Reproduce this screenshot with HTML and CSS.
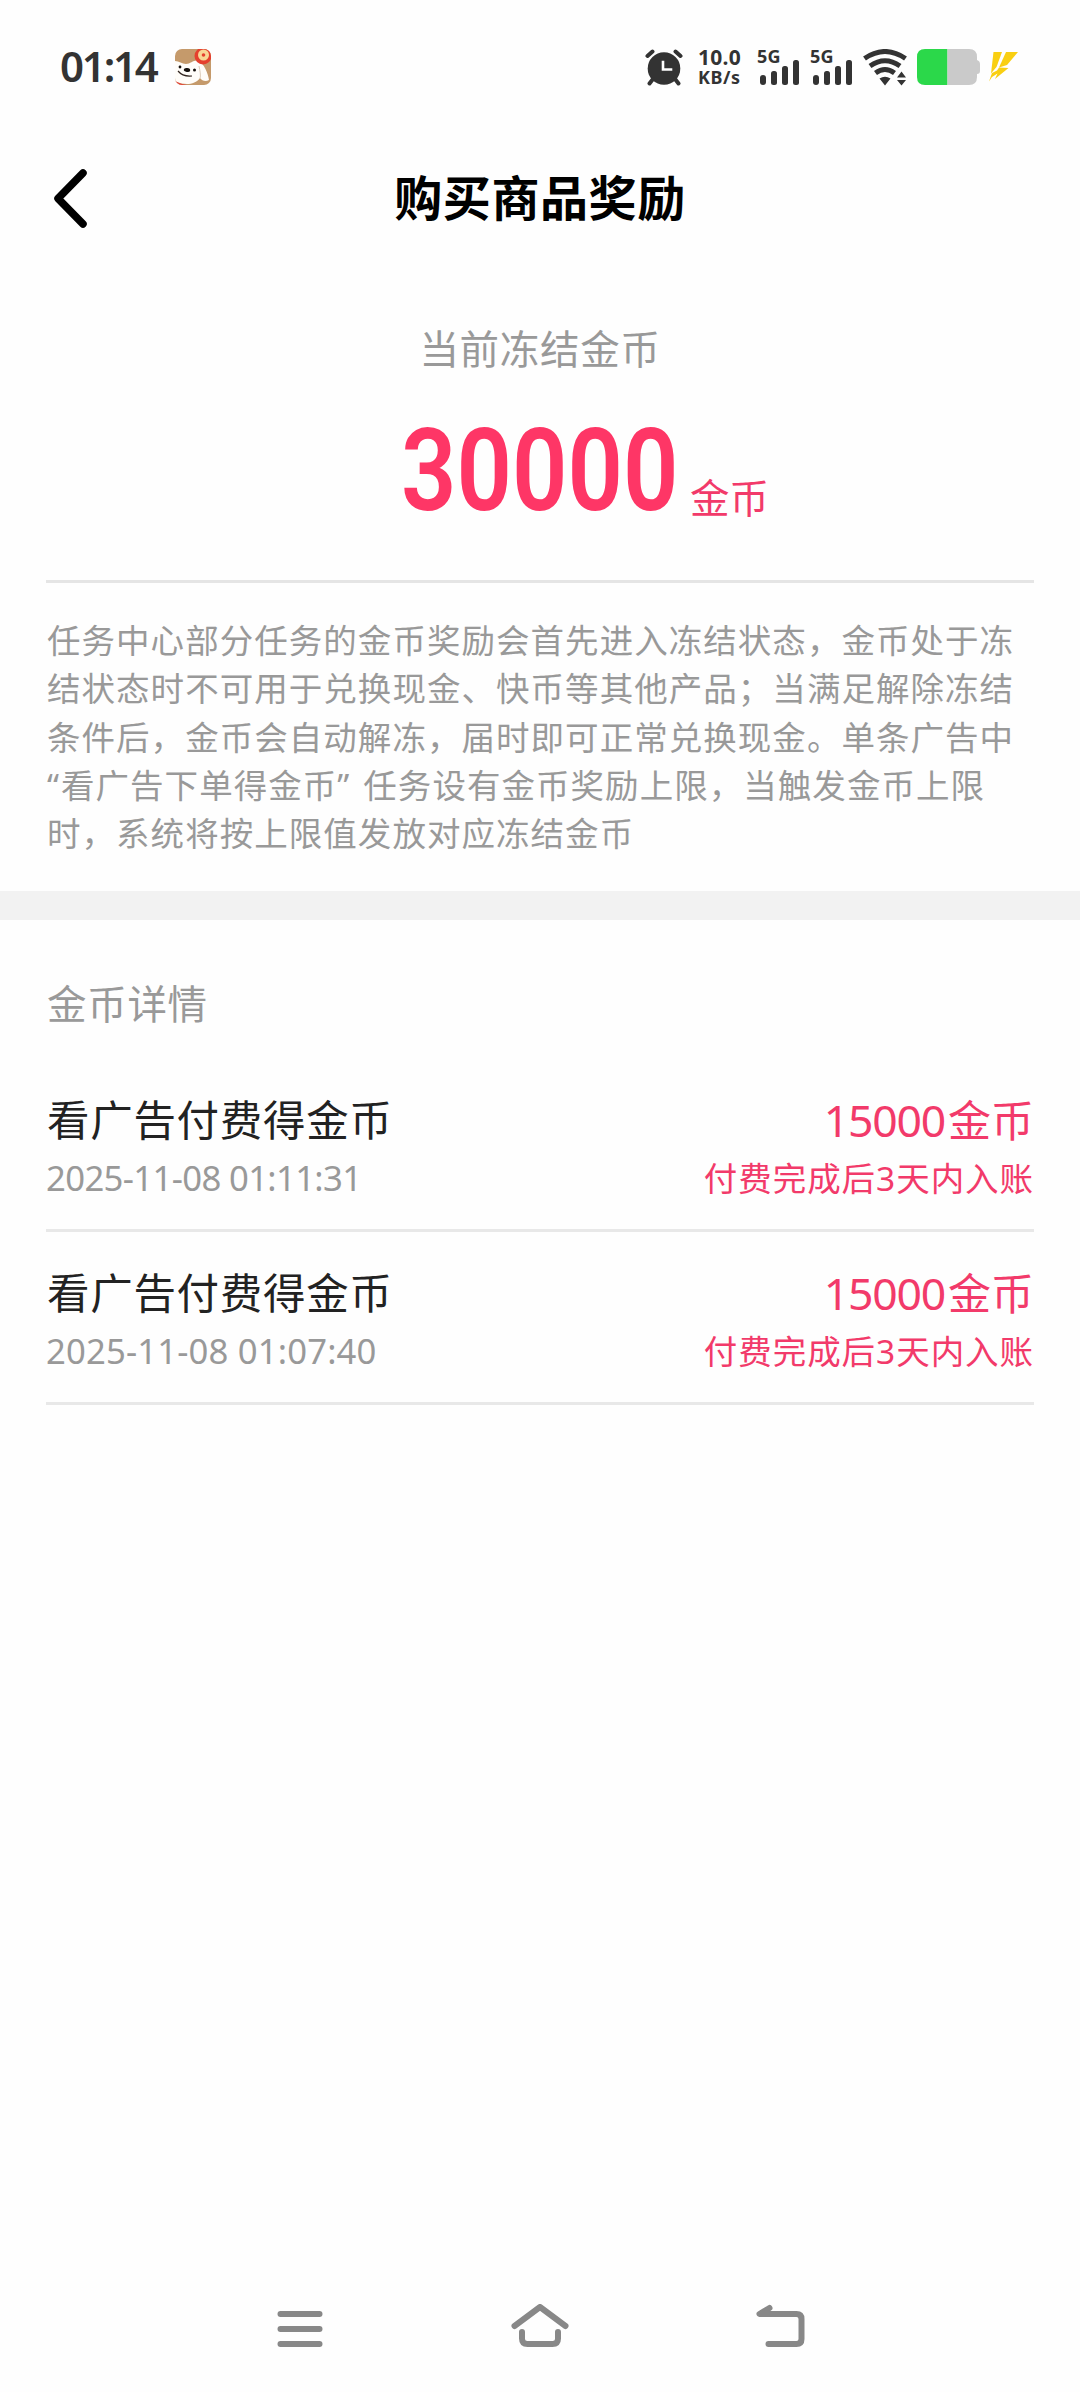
FILE: index.html
```html
<!DOCTYPE html>
<html lang="zh-CN">
<head>
<meta charset="utf-8">
<title>购买商品奖励</title>
<link rel="stylesheet" href="styles.css">
</head>
<body>
<div class="screen">
  <div class="status-bar">
    <span class="clock">01:14</span>
    <svg class="app-icon" width="36" height="36" viewBox="0 0 36 36">
      <defs><clipPath id="tile"><rect width="36" height="36" rx="7"/></clipPath></defs>
      <g clip-path="url(#tile)">
        <rect width="36" height="36" fill="#c59a6b"/>
        <path d="M0 12C4 12 7 15 11 15C16 15 19 10 24 12C29 15 33 24 34 31C31 33 27 32 25 29C22 33 17 35 12 35L0 34Z" fill="#fffdf9"/>
        <path d="M24 17C25 22 26 26 25 30" stroke="#dccbb9" stroke-width="1" fill="none"/>
        <path d="M0 32Q6 35 12 36H0Z" fill="#e2493b"/>
        <circle cx="28" cy="7" r="8.500" fill="#e5402e"/>
        <circle cx="28.500" cy="6" r="5.500" fill="#f8d695"/>
        <circle cx="28.500" cy="6" r="1.800" fill="#e5402e"/>
        <ellipse cx="12" cy="21" rx="3.200" ry="2" fill="#17120f" transform="rotate(8 12 21)"/>
        <circle cx="5" cy="18" r="1.400" fill="#17120f"/>
        <circle cx="19.500" cy="21" r="1.500" fill="#17120f"/>
        <path d="M3 22Q8 28 17 27" stroke="#32251f" stroke-width="1.200" fill="none"/>
      </g>
    </svg>
    <div class="indicators">
      <svg class="alarm" width="38" height="37" viewBox="0 0 38 37" fill="none" stroke="#333" stroke-linecap="round">
        <circle cx="19" cy="19.500" r="16.300" fill="#333" stroke="none"/>
        <path d="M2.500 7L7.500 2.500M30.500 2.500L35.500 7M8 30L4.500 34.500M30 30L33.500 34.500" stroke-width="4"/>
        <path d="M18 13V20.500H26" stroke="#fff" stroke-width="2.600" stroke-linecap="square"/>
      </svg>
      <div class="speed"><span class="speed-value">10.0</span><span class="speed-unit">KB/s</span></div>
      <div class="signal">
        <span class="network">5G</span>
        <svg width="40" height="25" viewBox="0 0 40 25" fill="#333"><rect y="15" width="6" height="10" rx="3"/><rect x="11" y="11" width="6" height="14" rx="2.500"/><rect x="22" y="6" width="6" height="19" rx="2.500"/><rect x="33" width="6" height="25" rx="2.500"/></svg>
      </div>
      <div class="signal">
        <span class="network">5G</span>
        <svg width="40" height="25" viewBox="0 0 40 25" fill="#333"><rect y="15" width="6" height="10" rx="3"/><rect x="11" y="11" width="6" height="14" rx="2.500"/><rect x="22" y="6" width="6" height="19" rx="2.500"/><rect x="33" width="6" height="25" rx="2.500"/></svg>
      </div>
      <svg class="wifi" width="45" height="37" viewBox="0 0 45 37" fill="none" stroke="#333" stroke-width="5">
        <path d="M1.500 9.500Q22 -4.500 42.500 9.500M7 17Q22 6.500 37 17M12.500 24Q22 17 31.500 24"/>
        <path d="M16.500 29.500Q22 26 27.500 29.500L22 36.500ZM34 28.500L38.500 22.500L43 28.500ZM34 31L38.500 36.500L43 31Z" fill="#333" stroke="none"/>
      </svg>
      <svg class="battery" width="63" height="36" viewBox="0 0 63 36">
        <path d="M8 0H30.500V36H8Q0 36 0 28V8Q0 0 8 0Z" fill="#2bd84a"/>
        <path d="M30.500 0H52Q60 0 60 8V11Q63 12 63 15V22Q63 25 60 25V28Q60 36 52 36H30.500Z" fill="#cacaca"/>
      </svg>
      <svg class="bolt" width="29" height="30" viewBox="0 0 29 30" fill="#f9cf12">
        <path d="M4.500 0H13L7.500 15L2 21.500Z"/>
        <path d="M17 0H29L18 13L10 15.500Z"/>
        <path d="M10 15.500L19.500 16L6 27L8.500 21.500L3 25L0 29.500L3 21L8 18.500Z"/>
      </svg>
    </div>
  </div>

  <header class="nav-header">
    <svg class="back" width="33" height="75" viewBox="0 0 33 75" fill="none" stroke="#000" stroke-width="7.500" stroke-linecap="round" stroke-linejoin="round"><path d="M29 11L4 36.500L29 62"/></svg>
    <h1 class="title">购买商品奖励</h1>
  </header>

  <section class="summary">
    <p class="caption">当前冻结金币</p>
    <div class="amount"><span class="amount-box"><span class="amount-value">30000</span></span><span class="amount-unit">金币</span></div>
    <p class="rules">任务中心部分任务的金币奖励会首先进入冻结状态，金币处于冻<br>结状态时不可用于兑换现金、快币等其他产品；当满足解除冻结<br>条件后，金币会自动解冻，届时即可正常兑换现金。单条广告中<br><span class="quote">“</span>看广告下单得金币<span class="quote quote-end">”</span>任务设有金币奖励上限，当触发金币上限<br>时，系统将按上限值发放对应冻结金币</p>
  </section>

  <section class="details">
    <h2 class="details-title">金币详情</h2>
    <div class="record">
      <div class="line"><span class="name">看广告付费得金币</span><span class="coins"><span class="num">15000</span>金币</span></div>
      <div class="line sub"><span class="date date-narrow">2025-11-08 01:11:31</span><span class="note">付费完成后<span class="num">3</span>天内入账</span></div>
    </div>
    <div class="record">
      <div class="line"><span class="name">看广告付费得金币</span><span class="coins"><span class="num">15000</span>金币</span></div>
      <div class="line sub"><span class="date">2025-11-08 01:07:40</span><span class="note">付费完成后<span class="num">3</span>天内入账</span></div>
    </div>
  </section>

  <nav class="system-nav">
    <svg width="46" height="44" viewBox="0 0 46 44" stroke="#888" stroke-width="6" stroke-linecap="round"><path d="M3.500 10H42.500M3.500 25H42.500M3.500 40H42.500"/></svg>
    <svg width="58" height="44" viewBox="0 0 58 44" fill="none" stroke="#888" stroke-width="6" stroke-linecap="round" stroke-linejoin="round"><path d="M3.500 22L29 3L54.500 22M11 28V34.500Q11 40 16.500 40H41.500Q47 40 47 34.500V28"/></svg>
    <svg width="49" height="44" viewBox="0 0 49 44" fill="none" stroke="#888" stroke-width="6" stroke-linecap="round" stroke-linejoin="round"><path d="M13.500 4L3.500 10H40.500Q45.500 10 45.500 15V35Q45.500 40 40.500 40H12.500"/></svg>
  </nav>
</div>
</body>
</html>
```
FILE: styles.css
```css
* { box-sizing: border-box; margin: 0; padding: 0; }
body { background: #fff; font-family: "Noto Sans CJK SC", sans-serif; color: #222; }
svg { display: block; flex: none; }

.screen { width: 1080px; height: 2392px; display: flex; flex-direction: column; background: #fefefe; overflow: hidden; white-space: nowrap; }

.status-bar { height: 134px; padding: 0 62px 0 60px; display: flex; align-items: center; color: #333; font-family: "Noto Sans", sans-serif; }
.clock { width: 115px; font-size: 42px; font-weight: 600; line-height: 60px; letter-spacing: -2.200px; margin-top: -2px; }
.indicators { margin-left: auto; display: flex; align-items: center; }
.speed { width: 44px; margin-left: 15px; display: flex; flex-direction: column; font-weight: 700; }
.speed-value { font-size: 21px; line-height: 20px; letter-spacing: 0.3px; }
.speed-unit { font-size: 18px; line-height: 20px; letter-spacing: 0.5px; }
.signal { width: 42px; height: 36px; margin-left: 16px; display: grid; }
.signal + .signal { margin-left: 11px; }
.signal > * { grid-area: 1 / 1; }
.signal svg { align-self: end; margin-left: 2px; }
.network { font-size: 18px; line-height: 15px; font-weight: 700; letter-spacing: 0.3px; margin-left: -1px; }
.wifi { margin-left: 10px; }
.battery { margin-left: 9px; }
.bolt { margin-left: 9px; }

.nav-header { height: 130px; padding: 0 54px; display: grid; grid-template-columns: 33px 1fr 33px; align-items: center; }
.title { font-size: 48px; line-height: 70px; font-weight: 700; letter-spacing: 0.6px; text-align: center; color: #000; margin-top: -8px; }

.summary { height: 627px; padding: 55px 46px 0; color: #999; }
.caption { font-size: 39.500px; line-height: 56px; letter-spacing: 0.7px; text-align: center; }
.amount { height: 208px; padding: 1px 264px 0 355px; display: flex; align-items: baseline; color: #fe3666; border-bottom: 3px solid #e5e5e5; }
.amount-box { width: 289px; flex: none; }
.amount-value { display: inline-block; font-family: Roboto, sans-serif; font-size: 115px; line-height: 190px; font-weight: 600; transform: scaleX(0.845); transform-origin: left; }
.amount-unit { font-size: 39.500px; line-height: 58px; color: #f23a6a; transform: translateY(3px); }
.rules { padding: 32px 0 0 1px; font-size: 33.500px; line-height: 48.300px; letter-spacing: 1.040px; }
.quote { display: inline-block; width: 14px; font-family: "Noto Sans", sans-serif; line-height: 1; letter-spacing: 0; }
.quote-end { width: 26px; }

.details { border-top: 29px solid #f2f2f2; padding: 0 46px; }
.details-title { padding: 54px 0 0 1px; font-size: 39.500px; line-height: 56px; font-weight: 400; letter-spacing: 0.7px; color: #999; }
.record { height: 173px; border-bottom: 3px solid #e8e8e8; padding-top: 29px; }
.details-title + .record { margin-top: 29px; }
.line { height: 60px; line-height: 60px; display: flex; justify-content: space-between; }
.sub { height: 58px; line-height: 58px; }
.name { font-size: 42.500px; letter-spacing: 0.7px; color: #222; padding-left: 1px; }
.coins { font-size: 43px; color: #f23a6a; }
.num { font-family: "Noto Sans", sans-serif; line-height: 1; }
.coins .num { font-size: 44.500px; letter-spacing: -1.200px; margin-right: 3px; }
.date { font-family: "Noto Sans", sans-serif; font-size: 34.700px; letter-spacing: 0.15px; color: #999; padding-top: 1px; }
.date-narrow { letter-spacing: -0.65px; }
.note { font-size: 33.500px; letter-spacing: 0.95px; color: #f23a6a; }

.system-nav { margin-top: auto; height: 88px; padding: 0 275px 0 277px; display: flex; justify-content: space-between; }
```
